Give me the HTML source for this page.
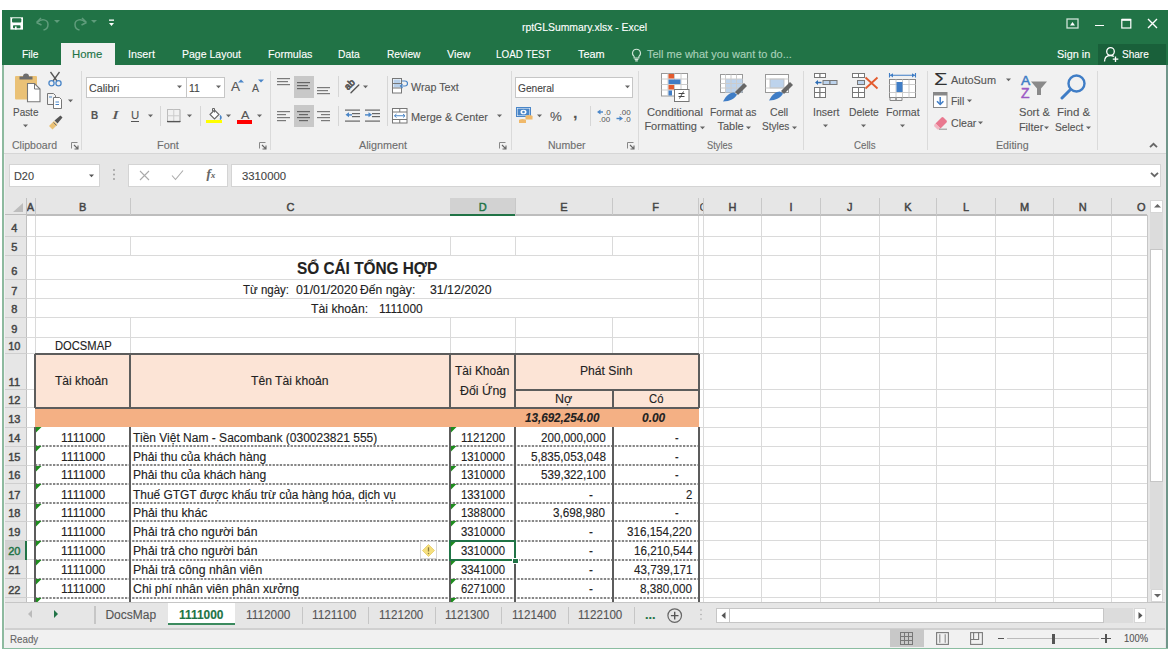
<!DOCTYPE html><html><head><meta charset="utf-8"><style>
*{margin:0;padding:0;box-sizing:border-box}
html,body{width:1169px;height:649px;overflow:hidden;background:#fff}
body{position:relative;font-family:"Liberation Sans",sans-serif;color:#444}
div{position:absolute}
.t{white-space:nowrap;-webkit-text-stroke:0.12px currentColor}
</style></head><body>
<div style="left:2.00px;top:10.00px;width:1166.00px;height:639.00px;background:#217346"></div>
<div style="left:3.50px;top:65.40px;width:1162.50px;height:88.10px;background:#f1f1f1"></div>
<div style="left:3.50px;top:153.00px;width:1162.50px;height:1.00px;background:#d6d6d6"></div>
<div style="left:3.50px;top:154.00px;width:1162.50px;height:43.50px;background:#e6e6e6"></div>
<div style="left:3.50px;top:197.50px;width:1162.50px;height:17.50px;background:#e6e6e6"></div>
<div style="left:3.50px;top:215.00px;width:1162.50px;height:387.70px;background:#fff"></div>
<div style="left:3.50px;top:602.70px;width:1162.50px;height:25.80px;background:#e6e6e6"></div>
<div style="left:3.50px;top:628.50px;width:1162.50px;height:19.00px;background:#f1f1f1"></div>
<div style="left:3.50px;top:628.00px;width:1162.50px;height:1.50px;background:#d0d0d0"></div>
<svg style="position:absolute;left:10px;top:16px;" width="14" height="15" viewBox="0 0 14 15"><rect x="0.4" y="1" width="12.6" height="12.6" fill="#fff"/><rect x="0.4" y="1" width="12.6" height="0.8" fill="#a8ccb6"/><rect x="2" y="2.2" width="9.3" height="4.2" rx="1" fill="#217346"/><rect x="3" y="9.3" width="7.5" height="3" rx="0.8" fill="#217346"/><rect x="5" y="10.5" width="1.6" height="3" fill="#fff"/></svg>
<svg style="position:absolute;left:35px;top:16px;" width="16" height="15" viewBox="0 0 16 15"><path d="M3 6 C6 2.5 13 3 13 8.5 C13 11.5 11 13.5 8.5 14" fill="none" stroke="#5f9c7b" stroke-width="1.5"/><path d="M1.5 6.5 L6 2 M1.5 6.5 L6.5 9" fill="none" stroke="#5f9c7b" stroke-width="1.5"/></svg>
<svg style="position:absolute;left:54px;top:20px;" width="6" height="4" viewBox="0 0 6 4"><path d="M0 0h6L3 3z" fill="#5f9c7b"/></svg>
<svg style="position:absolute;left:72px;top:16px;" width="16" height="15" viewBox="0 0 16 15"><path d="M13 6 C10 2.5 3 3 3 8.5 C3 11.5 5 13.5 7.5 14" fill="none" stroke="#5f9c7b" stroke-width="1.5"/><path d="M14.5 6.5 L10 2 M14.5 6.5 L9.5 9" fill="none" stroke="#5f9c7b" stroke-width="1.5"/></svg>
<svg style="position:absolute;left:91px;top:20px;" width="6" height="4" viewBox="0 0 6 4"><path d="M0 0h6L3 3z" fill="#5f9c7b"/></svg>
<svg style="position:absolute;left:108px;top:18px;" width="8" height="10" viewBox="0 0 8 10"><rect x="1" y="1.5" width="5" height="1.3" fill="#fff"/><path d="M1 5h5L3.5 8z" fill="#fff"/></svg>
<div class="t" style="left:521.50px;top:22.00px;font-size:10.5px;line-height:11.73px;color:#fff;transform:scaleX(0.9889);transform-origin:0 0;">rptGLSummary.xlsx - Excel</div>
<svg style="position:absolute;left:1066px;top:18px;" width="14" height="11" viewBox="0 0 14 11"><rect x="1" y="1" width="11" height="9" fill="none" stroke="#cfe3d7" stroke-width="1.3"/><path d="M4 7.5L6.5 4 9 7.5z" fill="#fff"/></svg>
<div style="left:1095.00px;top:24.50px;width:9.00px;height:1.30px;background:#fff"></div>
<svg style="position:absolute;left:1121px;top:18px;" width="11" height="11" viewBox="0 0 11 11"><rect x="0.8" y="1.5" width="9" height="8.5" fill="none" stroke="#fff" stroke-width="1.2"/><rect x="0.8" y="0.8" width="9" height="2" fill="#fff"/></svg>
<svg style="position:absolute;left:1147px;top:18px;" width="11" height="11" viewBox="0 0 11 11"><path d="M1 1L10 10M10 1L1 10" stroke="#fff" stroke-width="1.4"/></svg>
<div style="left:60.60px;top:43.30px;width:54.60px;height:22.30px;background:#f1f1f1"></div>
<div class="t" style="left:21.50px;top:47.95px;font-size:11px;line-height:12.29px;color:#fff;transform:scaleX(0.9310);transform-origin:0 0;">File</div>
<div class="t" style="left:72.40px;top:47.95px;font-size:11px;line-height:12.29px;color:#217346;transform:scaleX(1.0327);transform-origin:0 0;">Home</div>
<div class="t" style="left:128.30px;top:47.95px;font-size:11px;line-height:12.29px;color:#fff;transform:scaleX(0.9779);transform-origin:0 0;">Insert</div>
<div class="t" style="left:181.70px;top:47.95px;font-size:11px;line-height:12.29px;color:#fff;transform:scaleX(0.9552);transform-origin:0 0;">Page Layout</div>
<div class="t" style="left:267.60px;top:47.95px;font-size:11px;line-height:12.29px;color:#fff;transform:scaleX(0.9686);transform-origin:0 0;">Formulas</div>
<div class="t" style="left:338.30px;top:47.95px;font-size:11px;line-height:12.29px;color:#fff;transform:scaleX(0.9340);transform-origin:0 0;">Data</div>
<div class="t" style="left:387.00px;top:47.95px;font-size:11px;line-height:12.29px;color:#fff;transform:scaleX(0.9261);transform-origin:0 0;">Review</div>
<div class="t" style="left:446.60px;top:47.95px;font-size:11px;line-height:12.29px;color:#fff;transform:scaleX(0.9897);transform-origin:0 0;">View</div>
<div class="t" style="left:496.00px;top:47.95px;font-size:11px;line-height:12.29px;color:#fff;transform:scaleX(0.8979);transform-origin:0 0;">LOAD TEST</div>
<div class="t" style="left:577.80px;top:47.95px;font-size:11px;line-height:12.29px;color:#fff;transform:scaleX(0.9890);transform-origin:0 0;">Team</div>
<svg style="position:absolute;left:631px;top:48px;" width="12" height="14" viewBox="0 0 12 14"><path d="M5.5 1.2a4 4 0 0 0-2.4 7.2V10h4.8V8.4A4 4 0 0 0 5.5 1.2z" fill="none" stroke="#cfe5d8" stroke-width="1.1"/><path d="M3.6 11.4h3.8M4.2 12.9h2.6" stroke="#cfe5d8" stroke-width="1.1"/></svg>
<div class="t" style="left:647.00px;top:47.95px;font-size:11px;line-height:12.29px;color:#a9d1b9;">Tell me what you want to do...</div>
<div class="t" style="left:1056.80px;top:47.95px;font-size:11px;line-height:12.29px;color:#fff;transform:scaleX(0.9871);transform-origin:0 0;">Sign in</div>
<div style="left:1098.40px;top:43.70px;width:67.60px;height:21.50px;background:#19603a"></div>
<svg style="position:absolute;left:1103px;top:46px;" width="17" height="17" viewBox="0 0 17 17"><circle cx="7.5" cy="5.5" r="3.8" fill="none" stroke="#fff" stroke-width="1.3"/><path d="M1.5 15.5c0-4 2.5-6 6-6 1.5 0 2.5.3 3.3.9" fill="none" stroke="#fff" stroke-width="1.3"/><path d="M12.5 10.5v5.5M9.8 13.2h5.5" stroke="#fff" stroke-width="1.3"/></svg>
<div class="t" style="left:1122.40px;top:47.95px;font-size:11px;line-height:12.29px;color:#fff;transform:scaleX(0.9131);transform-origin:0 0;">Share</div>
<div style="left:80.50px;top:70.50px;width:1.00px;height:79.50px;background:#dadada"></div>
<div style="left:270.00px;top:70.50px;width:1.00px;height:79.50px;background:#dadada"></div>
<div style="left:510.50px;top:70.50px;width:1.00px;height:79.50px;background:#dadada"></div>
<div style="left:638.40px;top:70.50px;width:1.00px;height:79.50px;background:#dadada"></div>
<div style="left:802.80px;top:70.50px;width:1.00px;height:79.50px;background:#dadada"></div>
<div style="left:926.60px;top:70.50px;width:1.00px;height:79.50px;background:#dadada"></div>
<div style="left:1097.00px;top:70.50px;width:1.00px;height:79.50px;background:#dadada"></div>
<div class="t" style="left:12.00px;top:138.54px;font-size:11px;line-height:12.29px;color:#6e6e6e;transform:scaleX(0.9558);transform-origin:0 0;">Clipboard</div>
<svg style="position:absolute;left:70.5px;top:142px;" width="8" height="8" viewBox="0 0 8 8"><path d="M0.5 6.5V0.5h6" fill="none" stroke="#888" stroke-width="1"/><path d="M3 3L6.5 6.5M7 3.5V7H3.5" fill="none" stroke="#666" stroke-width="1.1"/></svg>
<div class="t" style="left:157.00px;top:138.54px;font-size:11px;line-height:12.29px;color:#6e6e6e;transform:scaleX(0.9905);transform-origin:0 0;">Font</div>
<svg style="position:absolute;left:259px;top:142px;" width="8" height="8" viewBox="0 0 8 8"><path d="M0.5 6.5V0.5h6" fill="none" stroke="#888" stroke-width="1"/><path d="M3 3L6.5 6.5M7 3.5V7H3.5" fill="none" stroke="#666" stroke-width="1.1"/></svg>
<div class="t" style="left:358.80px;top:138.54px;font-size:11px;line-height:12.29px;color:#6e6e6e;transform:scaleX(0.9814);transform-origin:0 0;">Alignment</div>
<svg style="position:absolute;left:499px;top:142px;" width="8" height="8" viewBox="0 0 8 8"><path d="M0.5 6.5V0.5h6" fill="none" stroke="#888" stroke-width="1"/><path d="M3 3L6.5 6.5M7 3.5V7H3.5" fill="none" stroke="#666" stroke-width="1.1"/></svg>
<div class="t" style="left:548.20px;top:138.54px;font-size:11px;line-height:12.29px;color:#6e6e6e;transform:scaleX(0.9586);transform-origin:0 0;">Number</div>
<svg style="position:absolute;left:627px;top:142px;" width="8" height="8" viewBox="0 0 8 8"><path d="M0.5 6.5V0.5h6" fill="none" stroke="#888" stroke-width="1"/><path d="M3 3L6.5 6.5M7 3.5V7H3.5" fill="none" stroke="#666" stroke-width="1.1"/></svg>
<div class="t" style="left:707.30px;top:138.54px;font-size:11px;line-height:12.29px;color:#6e6e6e;transform:scaleX(0.8480);transform-origin:0 0;">Styles</div>
<div class="t" style="left:854.00px;top:138.54px;font-size:11px;line-height:12.29px;color:#6e6e6e;transform:scaleX(0.8835);transform-origin:0 0;">Cells</div>
<div class="t" style="left:995.70px;top:138.54px;font-size:11px;line-height:12.29px;color:#6e6e6e;transform:scaleX(0.9693);transform-origin:0 0;">Editing</div>
<svg style="position:absolute;left:1148.5px;top:141.5px;" width="9" height="7" viewBox="0 0 9 7"><path d="M1 5.2L4.5 1.8L8 5.2" fill="none" stroke="#666" stroke-width="1.8"/></svg>
<svg style="position:absolute;left:13px;top:71px;" width="30" height="32" viewBox="0 0 30 32"><rect x="2" y="5" width="22" height="23.5" rx="1" fill="#eac176"/><path d="M6.5 8.5V5.5h3.5a3 3 0 0 1 6 0h3.5v3z" fill="#6d6d6d"/><path d="M14.5 12.5h7l5.5 5.5v12.7H14.5z" fill="#fff" stroke="#777" stroke-width="1.1"/><path d="M21.5 12.5v5.5H27" fill="none" stroke="#777" stroke-width="1"/></svg>
<div class="t" style="left:13.40px;top:105.55px;font-size:11px;line-height:12.29px;color:#555;transform:scaleX(0.9030);transform-origin:0 0;">Paste</div>
<svg style="position:absolute;left:22.7px;top:124.2px;" width="5" height="4" viewBox="0 0 5 4"><path d="M0 0.5h5L2.5 3.3z" fill="#666"/></svg>
<svg style="position:absolute;left:47px;top:71px;" width="16" height="16" viewBox="0 0 16 16"><path d="M3.5 1L10 10M12.5 1L6 10" stroke="#555" stroke-width="1.3"/><circle cx="4.5" cy="12.3" r="2.6" fill="none" stroke="#4a86c8" stroke-width="1.3"/><circle cx="11.5" cy="12.3" r="2.6" fill="none" stroke="#4a86c8" stroke-width="1.3"/></svg>
<svg style="position:absolute;left:46px;top:92px;" width="17" height="17" viewBox="0 0 17 17"><path d="M1.5 1.5h6l2 2v9h-8z" fill="#f4f4f4" stroke="#777" stroke-width="1"/><path d="M7.5 5.5h6l2 2v9h-8z" fill="#fff" stroke="#777" stroke-width="1"/><path d="M3 5h3M9.5 10h3.5M9.5 12.5h3.5" stroke="#4a86c8" stroke-width="1"/></svg>
<svg style="position:absolute;left:67.7px;top:99.2px;" width="5" height="4" viewBox="0 0 5 4"><path d="M0 0.5h5L2.5 3.3z" fill="#666"/></svg>
<svg style="position:absolute;left:47px;top:114px;" width="17" height="16" viewBox="0 0 17 16"><path d="M2 12l5-5 3.5 3.5-5 5z" fill="#eac176"/><path d="M7.5 6.5l6-5 2 2-5 6z" fill="#555"/><path d="M6.5 8.5l3 3" stroke="#777" stroke-width="1"/></svg>
<div style="left:85.50px;top:76.80px;width:101.00px;height:20.80px;background:#fff;border:1px solid #c6c6c6"></div>
<div style="left:186.00px;top:76.80px;width:39.00px;height:20.80px;background:#fff;border:1px solid #c6c6c6"></div>
<div class="t" style="left:88.50px;top:81.55px;font-size:11px;line-height:12.29px;color:#444;transform:scaleX(0.9720);transform-origin:0 0;">Calibri</div>
<svg style="position:absolute;left:176.7px;top:85px;" width="5" height="4" viewBox="0 0 5 4"><path d="M0 0.5h5L2.5 3.3z" fill="#666"/></svg>
<div class="t" style="left:188.60px;top:81.55px;font-size:11px;line-height:12.29px;color:#444;transform:scaleX(0.9459);transform-origin:0 0;">11</div>
<svg style="position:absolute;left:216.1px;top:85px;" width="5" height="4" viewBox="0 0 5 4"><path d="M0 0.5h5L2.5 3.3z" fill="#666"/></svg>
<div class="t" style="left:231.30px;top:80.89px;font-size:12.5px;line-height:13.96px;color:#555;transform:scaleX(1.0794);transform-origin:0 0;">A</div>
<svg style="position:absolute;left:238px;top:79px;" width="6" height="4" viewBox="0 0 6 4"><path d="M0 3.5L3 0.5L6 3.5z" fill="#4a86c8"/></svg>
<div class="t" style="left:252.00px;top:83.15px;font-size:10px;line-height:11.17px;color:#555;transform:scaleX(1.0494);transform-origin:0 0;">A</div>
<svg style="position:absolute;left:258px;top:79px;" width="6" height="4" viewBox="0 0 6 4"><path d="M0 0.5h6L3 3.5z" fill="#4a86c8"/></svg>
<div class="t" style="left:91.00px;top:109.39px;font-size:11.5px;line-height:12.85px;color:#555;font-weight:bold;transform:scaleX(0.8669);transform-origin:0 0;">B</div>
<div class="t" style="left:112.00px;top:109.39px;font-size:11.5px;line-height:12.85px;color:#555;font-style:italic;transform:scaleX(1.7215);transform-origin:0 0;font-family:'Liberation Serif';">I</div>
<div class="t" style="left:130.80px;top:109.39px;font-size:11.5px;line-height:12.85px;color:#555;transform:scaleX(0.9873);transform-origin:0 0;">U</div>
<div style="left:130.60px;top:121.00px;width:8.40px;height:1.00px;background:#555"></div>
<svg style="position:absolute;left:147.5px;top:114.3px;" width="5" height="4" viewBox="0 0 5 4"><path d="M0 0.5h5L2.5 3.3z" fill="#666"/></svg>
<div style="left:160.00px;top:106.00px;width:1.00px;height:20.00px;background:#d6d6d6"></div>
<svg style="position:absolute;left:167px;top:109px;" width="14" height="14" viewBox="0 0 14 14"><rect x="0.5" y="0.5" width="12.5" height="12.5" fill="none" stroke="#aaa" stroke-width="1" stroke-dasharray="1 0"/><path d="M6.75 0.5v12.5M0.5 6.75h12.5" stroke="#ccc" stroke-width="1"/><path d="M0 12.5h13.5" stroke="#555" stroke-width="1.2"/></svg>
<svg style="position:absolute;left:187.1px;top:114.3px;" width="5" height="4" viewBox="0 0 5 4"><path d="M0 0.5h5L2.5 3.3z" fill="#666"/></svg>
<div style="left:199.50px;top:106.00px;width:1.00px;height:20.00px;background:#d6d6d6"></div>
<svg style="position:absolute;left:206px;top:107px;" width="17" height="13" viewBox="0 0 17 13"><path d="M4 7.5L8.5 3 13 7.5 8.5 12z" fill="#fff" stroke="#666" stroke-width="1.1"/><path d="M6.5 4.5V1.5h2v4" fill="none" stroke="#666" stroke-width="1"/><path d="M14 8.5q2 2 0 4" fill="#4a86c8" stroke="#4a86c8" stroke-width="1.5"/></svg>
<div style="left:206.00px;top:119.80px;width:15.60px;height:3.50px;background:#ffff00"></div>
<svg style="position:absolute;left:226.0px;top:114.3px;" width="5" height="4" viewBox="0 0 5 4"><path d="M0 0.5h5L2.5 3.3z" fill="#666"/></svg>
<div class="t" style="left:241.20px;top:108.79px;font-size:11.5px;line-height:12.85px;color:#555;transform:scaleX(1.0951);transform-origin:0 0;">A</div>
<div style="left:236.90px;top:120.00px;width:15.20px;height:3.50px;background:#ff0000"></div>
<svg style="position:absolute;left:256.8px;top:114.3px;" width="5" height="4" viewBox="0 0 5 4"><path d="M0 0.5h5L2.5 3.3z" fill="#666"/></svg>
<svg style="position:absolute;left:277.4px;top:78.4px;" width="13" height="10" viewBox="0 0 13 10"><rect x="0" y="0" width="13" height="1.2" fill="#7a7a7a"/><rect x="0" y="3" width="11" height="1.2" fill="#7a7a7a"/><rect x="0" y="6" width="13" height="1.2" fill="#7a7a7a"/></svg>
<div style="left:293.70px;top:76.10px;width:20.10px;height:21.90px;background:#c8c8c8"></div>
<svg style="position:absolute;left:297px;top:82.4px;" width="13" height="10" viewBox="0 0 13 10"><rect x="0" y="0" width="13" height="1.2" fill="#666"/><rect x="0" y="3" width="11" height="1.2" fill="#666"/><rect x="0" y="6" width="13" height="1.2" fill="#666"/></svg>
<svg style="position:absolute;left:317.2px;top:86.7px;" width="13" height="10" viewBox="0 0 13 10"><rect x="0" y="0" width="13" height="1.2" fill="#7a7a7a"/><rect x="0" y="3" width="11" height="1.2" fill="#7a7a7a"/><rect x="0" y="6" width="13" height="1.2" fill="#7a7a7a"/></svg>
<div style="left:338.00px;top:76.00px;width:1.00px;height:21.00px;background:#d6d6d6"></div>
<svg style="position:absolute;left:343px;top:77px;" width="19" height="19" viewBox="0 0 19 19"><g transform="translate(5,13.5) rotate(-45)"><text x="0" y="0" font-size="9.5" font-family="Liberation Sans" fill="#555" stroke="#555" stroke-width="0.7">ab</text></g><path d="M8 15.8L15.8 8" stroke="#555" stroke-width="1.4" stroke-linecap="round"/></svg>
<svg style="position:absolute;left:362.5px;top:85px;" width="5" height="4" viewBox="0 0 5 4"><path d="M0 0.5h5L2.5 3.3z" fill="#666"/></svg>
<svg style="position:absolute;left:277.4px;top:111px;" width="13" height="13" viewBox="0 0 13 13"><rect x="0" y="0" width="13" height="1.2" fill="#7a7a7a"/><rect x="0" y="3" width="9" height="1.2" fill="#7a7a7a"/><rect x="0" y="6" width="13" height="1.2" fill="#7a7a7a"/><rect x="0" y="9" width="9" height="1.2" fill="#7a7a7a"/></svg>
<div style="left:293.70px;top:105.20px;width:20.10px;height:21.90px;background:#c8c8c8"></div>
<svg style="position:absolute;left:297px;top:111px;" width="13" height="13" viewBox="0 0 13 13"><rect x="0.0" y="0" width="13" height="1.2" fill="#666"/><rect x="2.0" y="3" width="9" height="1.2" fill="#666"/><rect x="0.0" y="6" width="13" height="1.2" fill="#666"/><rect x="2.0" y="9" width="9" height="1.2" fill="#666"/></svg>
<svg style="position:absolute;left:317.2px;top:111px;" width="13" height="13" viewBox="0 0 13 13"><rect x="0" y="0" width="13" height="1.2" fill="#7a7a7a"/><rect x="4" y="3" width="9" height="1.2" fill="#7a7a7a"/><rect x="0" y="6" width="13" height="1.2" fill="#7a7a7a"/><rect x="4" y="9" width="9" height="1.2" fill="#7a7a7a"/></svg>
<div style="left:338.00px;top:106.00px;width:1.00px;height:20.00px;background:#d6d6d6"></div>
<svg style="position:absolute;left:345px;top:109px;" width="15" height="14" viewBox="0 0 15 14"><rect x="0" y="0.5" width="15" height="1.2" fill="#666"/><rect x="7" y="4" width="8" height="1.2" fill="#666"/><rect x="7" y="7" width="8" height="1.2" fill="#666"/><rect x="0" y="11.5" width="15" height="1.2" fill="#666"/><path d="M0.5 5.8L4 3.3v5z" fill="#4a86c8"/><rect x="3" y="5.2" width="4" height="1.4" fill="#4a86c8"/></svg>
<svg style="position:absolute;left:364.7px;top:109px;" width="15" height="14" viewBox="0 0 15 14"><rect x="0" y="0.5" width="15" height="1.2" fill="#666"/><rect x="7" y="4" width="8" height="1.2" fill="#666"/><rect x="7" y="7" width="8" height="1.2" fill="#666"/><rect x="0" y="11.5" width="15" height="1.2" fill="#666"/><path d="M7 5.8L3.5 3.3v5z" fill="#4a86c8"/><rect x="0" y="5.2" width="4" height="1.4" fill="#4a86c8"/></svg>
<div style="left:386.70px;top:76.00px;width:1.00px;height:50.00px;background:#d6d6d6"></div>
<svg style="position:absolute;left:392px;top:78px;" width="16" height="16" viewBox="0 0 16 16"><rect x="0.5" y="0.5" width="9" height="14.5" fill="#fff" stroke="#777" stroke-width="1"/><rect x="1.5" y="1.5" width="7" height="3.5" fill="#b8d0ea"/><rect x="1.5" y="6" width="7" height="3.5" fill="#b8d0ea"/><path d="M0.5 5.5h9M0.5 10h9" stroke="#777" stroke-width="1"/><path d="M10 3h3a2 2 0 0 1 0 5h-4" fill="none" stroke="#4a86c8" stroke-width="1.2"/><path d="M10.5 6l-2 2 2 2" fill="none" stroke="#4a86c8" stroke-width="1.2"/></svg>
<div class="t" style="left:410.70px;top:81.45px;font-size:11px;line-height:12.29px;color:#555;transform:scaleX(0.9733);transform-origin:0 0;">Wrap Text</div>
<svg style="position:absolute;left:392px;top:107.5px;" width="16" height="16" viewBox="0 0 16 16"><rect x="0.5" y="0.5" width="14.5" height="14.5" fill="#fff" stroke="#777" stroke-width="1"/><path d="M0.5 4h14.5M0.5 11.5h14.5M7.75 0.5v3.5M7.75 11.5v3.5" stroke="#777" stroke-width="1"/><path d="M2.5 7.75h10.5" stroke="#4a86c8" stroke-width="1"/><path d="M4.5 6l-2 1.75 2 1.75M11 6l2 1.75-2 1.75" fill="none" stroke="#4a86c8" stroke-width="1"/></svg>
<div class="t" style="left:410.70px;top:110.55px;font-size:11px;line-height:12.29px;color:#555;transform:scaleX(0.9905);transform-origin:0 0;">Merge &amp; Center</div>
<svg style="position:absolute;left:496.9px;top:114.3px;" width="5" height="4" viewBox="0 0 5 4"><path d="M0 0.5h5L2.5 3.3z" fill="#666"/></svg>
<div style="left:514.90px;top:76.80px;width:118.60px;height:20.80px;background:#fff;border:1px solid #c6c6c6"></div>
<div class="t" style="left:517.70px;top:81.55px;font-size:11px;line-height:12.29px;color:#444;transform:scaleX(0.9225);transform-origin:0 0;">General</div>
<svg style="position:absolute;left:624.5px;top:85px;" width="5" height="4" viewBox="0 0 5 4"><path d="M0 0.5h5L2.5 3.3z" fill="#666"/></svg>
<svg style="position:absolute;left:516px;top:107px;" width="18" height="17" viewBox="0 0 18 17"><rect x="0.5" y="0.5" width="14" height="9" fill="#fff" stroke="#4a86c8" stroke-width="1"/><rect x="1.5" y="1.5" width="12" height="7" fill="#4a86c8"/><ellipse cx="7.5" cy="5" rx="3" ry="2.3" fill="#fff"/><ellipse cx="7.5" cy="5" rx="1.3" ry="1.3" fill="#4a86c8"/><ellipse cx="13" cy="9.5" rx="3.5" ry="1.5" fill="#f0b96a"/><rect x="9.5" y="9.5" width="7" height="3" fill="#f0b96a"/><ellipse cx="6.5" cy="13.5" rx="3.5" ry="1.5" fill="#f0b96a"/><rect x="3" y="13" width="7" height="3" fill="#f0b96a"/></svg>
<svg style="position:absolute;left:537.1px;top:114.3px;" width="5" height="4" viewBox="0 0 5 4"><path d="M0 0.5h5L2.5 3.3z" fill="#666"/></svg>
<div class="t" style="left:550.30px;top:109.83px;font-size:13px;line-height:14.52px;color:#555;transform:scaleX(1.0208);transform-origin:0 0;">%</div>
<div class="t" style="left:572.50px;top:105.83px;font-size:14px;line-height:15.64px;color:#555;font-weight:bold;transform:scaleX(1.1570);transform-origin:0 0;">,</div>
<div style="left:589.60px;top:106.00px;width:1.00px;height:20.00px;background:#d6d6d6"></div>
<svg style="position:absolute;left:596px;top:107px;" width="15" height="16" viewBox="0 0 15 16"><path d="M1 5L4.5 2.5V7.5z" fill="#4a86c8"/><rect x="4" y="4.3" width="3" height="1.4" fill="#4a86c8"/><text x="8" y="8" font-size="8" font-family="Liberation Sans" fill="#555">.0</text><text x="3" y="15" font-size="8" font-family="Liberation Sans" fill="#555">.00</text></svg>
<svg style="position:absolute;left:616px;top:107px;" width="15" height="16" viewBox="0 0 15 16"><text x="3.5" y="7.5" font-size="8" font-family="Liberation Sans" fill="#555">.00</text><path d="M7 11.5L3.5 9V14z" fill="#4a86c8"/><rect x="0.5" y="10.8" width="3.5" height="1.4" fill="#4a86c8"/><text x="8" y="15" font-size="8" font-family="Liberation Sans" fill="#555">.0</text></svg>
<svg style="position:absolute;left:660px;top:73px;" width="31" height="30" viewBox="0 0 31 30"><rect x="1.5" y="0.5" width="26" height="22.5" fill="#fff" stroke="#999" stroke-width="1"/><path d="M1.5 6h26M1.5 11.5h26M1.5 17h26M8 0.5v22.5M14.5 0.5v22.5M21 0.5v22.5" stroke="#ccc" stroke-width="1"/><rect x="8.5" y="1" width="5.5" height="4.5" fill="#e35b2e"/><rect x="8.5" y="6.5" width="12" height="4.5" fill="#3f7dc6"/><rect x="8.5" y="12" width="5.5" height="4.5" fill="#e35b2e"/><rect x="8.5" y="17.5" width="3.5" height="5" fill="#3f7dc6"/><rect x="14.5" y="16.5" width="14.5" height="12" fill="#fff" stroke="#777" stroke-width="1"/><path d="M18.5 20.5h6M18.5 23.5h6M23.5 18.5l-4 7" stroke="#444" stroke-width="1"/></svg>
<div class="t" style="left:646.90px;top:105.95px;font-size:11px;line-height:12.29px;color:#555;transform:scaleX(1.0175);transform-origin:0 0;">Conditional</div>
<div class="t" style="left:644.40px;top:120.45px;font-size:11px;line-height:12.29px;color:#555;">Formatting</div>
<svg style="position:absolute;left:700.3px;top:125.5px;" width="5" height="4" viewBox="0 0 5 4"><path d="M0 0.5h5L2.5 3.3z" fill="#666"/></svg>
<svg style="position:absolute;left:720px;top:74px;" width="29" height="29" viewBox="0 0 29 29"><rect x="0.5" y="0.5" width="22" height="18" fill="#fff" stroke="#999" stroke-width="1"/><rect x="5.5" y="5" width="17" height="13.5" fill="#bdd3ec"/><path d="M0.5 5h22M0.5 9.5h22M0.5 14h22M5.5 0.5v18M11 0.5v18M16.5 0.5v18" stroke="#ccc" stroke-width="1"/><path d="M3 27.5c3-6 7-9 11-9l3 2c-2 4-7 7-14 7z" fill="#3f7dc6"/><path d="M15 18l9-9 3 3-9 9z" fill="#666"/></svg>
<div class="t" style="left:710.20px;top:105.95px;font-size:11px;line-height:12.29px;color:#555;transform:scaleX(0.9393);transform-origin:0 0;">Format as</div>
<div class="t" style="left:717.40px;top:120.45px;font-size:11px;line-height:12.29px;color:#555;">Table</div>
<svg style="position:absolute;left:746.0px;top:125.5px;" width="5" height="4" viewBox="0 0 5 4"><path d="M0 0.5h5L2.5 3.3z" fill="#666"/></svg>
<svg style="position:absolute;left:765px;top:74px;" width="30" height="28" viewBox="0 0 30 28"><rect x="0.5" y="0.5" width="23" height="18" fill="#fff" stroke="#999" stroke-width="1"/><rect x="5" y="5" width="14" height="9" fill="#bdd3ec" stroke="#bbb" stroke-width="0.8"/><path d="M0.5 5h23M0.5 14h23" stroke="#ccc" stroke-width="1"/><path d="M4 26.5c3-6 7-9 11-9l3 2c-2 4-7 7-14 7z" fill="#3f7dc6"/><path d="M16 17l9-9 3 3-9 9z" fill="#666"/></svg>
<div class="t" style="left:769.80px;top:105.95px;font-size:11px;line-height:12.29px;color:#555;transform:scaleX(0.9605);transform-origin:0 0;">Cell</div>
<div class="t" style="left:761.80px;top:120.45px;font-size:11px;line-height:12.29px;color:#555;transform:scaleX(0.9147);transform-origin:0 0;">Styles</div>
<svg style="position:absolute;left:791.5px;top:125.5px;" width="5" height="4" viewBox="0 0 5 4"><path d="M0 0.5h5L2.5 3.3z" fill="#666"/></svg>
<svg style="position:absolute;left:813px;top:72px;" width="27" height="28" viewBox="0 0 27 28"><rect x="1.5" y="1.5" width="5.5" height="4" fill="#fff" stroke="#777" stroke-width="1"/><rect x="7" y="1.5" width="5.5" height="4" fill="#fff" stroke="#777" stroke-width="1"/><rect x="10" y="8.5" width="7" height="4" fill="#bdd3ec" stroke="#777" stroke-width="1"/><rect x="17" y="8.5" width="7" height="4" fill="#bdd3ec" stroke="#777" stroke-width="1"/><path d="M2 10.5l3-2.5v5z" fill="#2f6db5"/><rect x="4" y="9.8" width="4.5" height="1.5" fill="#2f6db5"/><rect x="1.5" y="15.5" width="5.5" height="5" fill="#fff" stroke="#777" stroke-width="1"/><rect x="7" y="15.5" width="5.5" height="5" fill="#fff" stroke="#777" stroke-width="1"/><rect x="1.5" y="20.5" width="5.5" height="5" fill="#fff" stroke="#777" stroke-width="1"/><rect x="7" y="20.5" width="5.5" height="5" fill="#fff" stroke="#777" stroke-width="1"/></svg>
<div class="t" style="left:812.50px;top:106.05px;font-size:11px;line-height:12.29px;color:#555;transform:scaleX(0.9561);transform-origin:0 0;">Insert</div>
<svg style="position:absolute;left:823.2px;top:124.3px;" width="5" height="4" viewBox="0 0 5 4"><path d="M0 0.5h5L2.5 3.3z" fill="#666"/></svg>
<svg style="position:absolute;left:851px;top:72px;" width="29" height="28" viewBox="0 0 29 28"><rect x="1.5" y="1.5" width="6" height="4" fill="#fff" stroke="#777" stroke-width="1"/><rect x="7.5" y="1.5" width="6" height="4" fill="#fff" stroke="#777" stroke-width="1"/><rect x="6.5" y="8.5" width="7" height="4" fill="#bdd3ec" stroke="#777" stroke-width="1"/><rect x="1.5" y="15.5" width="6" height="5" fill="#fff" stroke="#777" stroke-width="1"/><rect x="7.5" y="15.5" width="6" height="5" fill="#fff" stroke="#777" stroke-width="1"/><rect x="1.5" y="20.5" width="6" height="5" fill="#fff" stroke="#777" stroke-width="1"/><rect x="7.5" y="20.5" width="6" height="5" fill="#fff" stroke="#777" stroke-width="1"/><path d="M14.5 5.5l12 11M26.5 5.5l-12 11" stroke="#e35b2e" stroke-width="1.8"/></svg>
<div class="t" style="left:849.20px;top:106.05px;font-size:11px;line-height:12.29px;color:#555;transform:scaleX(0.9372);transform-origin:0 0;">Delete</div>
<svg style="position:absolute;left:861.3px;top:124.3px;" width="5" height="4" viewBox="0 0 5 4"><path d="M0 0.5h5L2.5 3.3z" fill="#666"/></svg>
<svg style="position:absolute;left:888px;top:72px;" width="29" height="31" viewBox="0 0 29 31"><path d="M1.5 1v4.5M27.5 1v4.5M2 3.2h25" stroke="#3f7dc6" stroke-width="1.1"/><path d="M2 3.2l3-2v4.4zM27 3.2l-3-2v4.4z" fill="#3f7dc6"/><rect x="1.5" y="7.5" width="26" height="18" fill="#fff" stroke="#888" stroke-width="1"/><path d="M1.5 12.5h26M1.5 20.5h26M8 7.5v18M14.5 7.5v18M21 7.5v18" stroke="#ccc" stroke-width="1"/><rect x="8.5" y="10" width="6" height="10" fill="#3f7dc6"/><path d="M2 25.5v3h6v-3M8 25.5v3h6v-3" fill="none" stroke="#888" stroke-width="1"/></svg>
<div class="t" style="left:886.00px;top:106.05px;font-size:11px;line-height:12.29px;color:#555;transform:scaleX(0.9646);transform-origin:0 0;">Format</div>
<svg style="position:absolute;left:900.1px;top:124.3px;" width="5" height="4" viewBox="0 0 5 4"><path d="M0 0.5h5L2.5 3.3z" fill="#666"/></svg>
<div class="t" style="left:933.50px;top:70.41px;font-size:17px;line-height:18.99px;color:#333;transform:scaleX(1.2847);transform-origin:0 0;">&Sigma;</div>
<div class="t" style="left:951.40px;top:73.75px;font-size:11px;line-height:12.29px;color:#555;transform:scaleX(0.9946);transform-origin:0 0;">AutoSum</div>
<svg style="position:absolute;left:1005.5px;top:77.5px;" width="5" height="4" viewBox="0 0 5 4"><path d="M0 0.5h5L2.5 3.3z" fill="#666"/></svg>
<svg style="position:absolute;left:933px;top:92px;" width="16" height="17" viewBox="0 0 16 17"><rect x="0.5" y="0.5" width="13.5" height="15" fill="#fff" stroke="#888" stroke-width="1"/><rect x="0.5" y="0.5" width="13.5" height="3" fill="#888"/><path d="M7.2 5v7" stroke="#3f7dc6" stroke-width="1.5"/><path d="M4 9.2l3.2 3.3 3.2-3.3" fill="none" stroke="#3f7dc6" stroke-width="1.5"/></svg>
<div class="t" style="left:951.40px;top:95.25px;font-size:11px;line-height:12.29px;color:#555;transform:scaleX(0.9394);transform-origin:0 0;">Fill</div>
<svg style="position:absolute;left:966.5px;top:99.3px;" width="5" height="4" viewBox="0 0 5 4"><path d="M0 0.5h5L2.5 3.3z" fill="#666"/></svg>
<svg style="position:absolute;left:933px;top:115px;" width="16" height="15" viewBox="0 0 16 15"><path d="M2.5 8.5L8.5 2.5a1.5 1.5 0 0 1 2 0l3 3a1.5 1.5 0 0 1 0 2L7.5 13.5z" fill="#e9788f"/><path d="M2.5 8.5l5 5-1 1H4.5l-3-3a1.5 1.5 0 0 1 0-2z" fill="#f2b6c2"/><path d="M6 14.2h8" stroke="#999" stroke-width="1.1"/></svg>
<div class="t" style="left:951.40px;top:117.05px;font-size:11px;line-height:12.29px;color:#555;transform:scaleX(0.9625);transform-origin:0 0;">Clear</div>
<svg style="position:absolute;left:978.0px;top:121px;" width="5" height="4" viewBox="0 0 5 4"><path d="M0 0.5h5L2.5 3.3z" fill="#666"/></svg>
<div class="t" style="left:1020.50px;top:73.08px;font-size:13.5px;line-height:15.08px;color:#3f7dc6;transform:scaleX(1.0217);transform-origin:0 0;-webkit-text-stroke:0.5px #3f7dc6;">A</div>
<div class="t" style="left:1021.00px;top:85.93px;font-size:14px;line-height:15.64px;color:#9b59c4;transform:scaleX(0.9940);transform-origin:0 0;-webkit-text-stroke:0.5px #9b59c4;">Z</div>
<svg style="position:absolute;left:1030px;top:80px;" width="18" height="16" viewBox="0 0 18 16"><path d="M1 1.5h16L11 8.5v6.5h-4V8.5z" fill="#8a8a8a"/></svg>
<div class="t" style="left:1018.50px;top:105.84px;font-size:11px;line-height:12.29px;color:#555;transform:scaleX(1.0109);transform-origin:0 0;">Sort &amp;</div>
<div class="t" style="left:1018.90px;top:121.05px;font-size:11px;line-height:12.29px;color:#555;">Filter</div>
<svg style="position:absolute;left:1044.3px;top:125.5px;" width="5" height="4" viewBox="0 0 5 4"><path d="M0 0.5h5L2.5 3.3z" fill="#666"/></svg>
<svg style="position:absolute;left:1059px;top:73px;" width="28" height="27" viewBox="0 0 28 27"><circle cx="17.5" cy="10.5" r="8" fill="none" stroke="#3f7dc6" stroke-width="2.4"/><path d="M11.5 16.5L3 25" stroke="#3f7dc6" stroke-width="3" stroke-linecap="round"/></svg>
<div class="t" style="left:1056.80px;top:105.84px;font-size:11px;line-height:12.29px;color:#555;transform:scaleX(1.0444);transform-origin:0 0;">Find &amp;</div>
<div class="t" style="left:1055.00px;top:121.05px;font-size:11px;line-height:12.29px;color:#555;transform:scaleX(0.9257);transform-origin:0 0;">Select</div>
<svg style="position:absolute;left:1086.0px;top:125.5px;" width="5" height="4" viewBox="0 0 5 4"><path d="M0 0.5h5L2.5 3.3z" fill="#666"/></svg>
<div style="left:8.60px;top:163.80px;width:91.40px;height:23.50px;background:#fff;border:1px solid #d4d4d4"></div>
<div class="t" style="left:14.00px;top:170.24px;font-size:11px;line-height:12.29px;color:#444;transform:scaleX(0.9912);transform-origin:0 0;">D20</div>
<svg style="position:absolute;left:88.5px;top:173.5px;" width="5" height="4" viewBox="0 0 5 4"><path d="M0 0.5h5L2.5 3.3z" fill="#555"/></svg>
<svg style="position:absolute;left:112px;top:168px;" width="4" height="14" viewBox="0 0 4 14"><circle cx="2" cy="2" r="0.9" fill="#999"/><circle cx="2" cy="6.5" r="0.9" fill="#999"/><circle cx="2" cy="11" r="0.9" fill="#999"/></svg>
<div style="left:128.30px;top:163.80px;width:99.50px;height:23.50px;background:#fff;border:1px solid #d4d4d4"></div>
<svg style="position:absolute;left:139px;top:170px;" width="11" height="11" viewBox="0 0 11 11"><path d="M1 1L10 10M10 1L1 10" stroke="#aaa" stroke-width="1.1"/></svg>
<svg style="position:absolute;left:171px;top:169px;" width="13" height="12" viewBox="0 0 13 12"><path d="M1 6.5L4.5 10.5L12 1.5" fill="none" stroke="#aaa" stroke-width="1.1"/></svg>
<div class="t" style="left:206.50px;top:167.24px;font-size:13px;line-height:14.52px;color:#666;font-weight:bold;font-style:italic;font-family:'Liberation Serif';">f</div>
<div class="t" style="left:211.00px;top:171.11px;font-size:8.5px;line-height:9.49px;color:#666;font-weight:bold;font-style:italic;font-family:'Liberation Serif';">x</div>
<div style="left:231.00px;top:163.50px;width:930.00px;height:23.10px;background:#fff;border:1px solid #d4d4d4"></div>
<div class="t" style="left:242.00px;top:169.79px;font-size:11.5px;line-height:12.85px;color:#444;transform:scaleX(0.9829);transform-origin:0 0;">3310000</div>
<svg style="position:absolute;left:1150px;top:171px;" width="9" height="7" viewBox="0 0 9 7"><path d="M1 1.8L4.5 5.2L8 1.8" fill="none" stroke="#666" stroke-width="1.8"/></svg>
<div style="left:26.50px;top:235.50px;width:1120.00px;height:1.00px;background:#dadada"></div>
<div style="left:26.50px;top:255.00px;width:1120.00px;height:1.00px;background:#dadada"></div>
<div style="left:26.50px;top:279.10px;width:1120.00px;height:1.00px;background:#dadada"></div>
<div style="left:26.50px;top:298.20px;width:1120.00px;height:1.00px;background:#dadada"></div>
<div style="left:26.50px;top:316.70px;width:1120.00px;height:1.00px;background:#dadada"></div>
<div style="left:26.50px;top:336.50px;width:1120.00px;height:1.00px;background:#dadada"></div>
<div style="left:26.50px;top:353.20px;width:1120.00px;height:1.00px;background:#dadada"></div>
<div style="left:26.50px;top:389.20px;width:1120.00px;height:1.00px;background:#dadada"></div>
<div style="left:26.50px;top:407.40px;width:1120.00px;height:1.00px;background:#dadada"></div>
<div style="left:26.50px;top:426.70px;width:1120.00px;height:1.00px;background:#dadada"></div>
<div style="left:26.50px;top:445.70px;width:1120.00px;height:1.00px;background:#dadada"></div>
<div style="left:26.50px;top:464.80px;width:1120.00px;height:1.00px;background:#dadada"></div>
<div style="left:26.50px;top:483.10px;width:1120.00px;height:1.00px;background:#dadada"></div>
<div style="left:26.50px;top:502.80px;width:1120.00px;height:1.00px;background:#dadada"></div>
<div style="left:26.50px;top:520.70px;width:1120.00px;height:1.00px;background:#dadada"></div>
<div style="left:26.50px;top:540.10px;width:1120.00px;height:1.00px;background:#dadada"></div>
<div style="left:26.50px;top:559.10px;width:1120.00px;height:1.00px;background:#dadada"></div>
<div style="left:26.50px;top:578.10px;width:1120.00px;height:1.00px;background:#dadada"></div>
<div style="left:26.50px;top:597.20px;width:1120.00px;height:1.00px;background:#dadada"></div>
<div style="left:34.50px;top:215.00px;width:1.00px;height:387.70px;background:#dadada"></div>
<div style="left:129.90px;top:215.00px;width:1.00px;height:387.70px;background:#dadada"></div>
<div style="left:449.80px;top:215.00px;width:1.00px;height:387.70px;background:#dadada"></div>
<div style="left:514.70px;top:215.00px;width:1.00px;height:387.70px;background:#dadada"></div>
<div style="left:612.20px;top:215.00px;width:1.00px;height:387.70px;background:#dadada"></div>
<div style="left:698.20px;top:215.00px;width:1.00px;height:387.70px;background:#dadada"></div>
<div style="left:702.80px;top:215.00px;width:1.00px;height:387.70px;background:#dadada"></div>
<div style="left:761.30px;top:215.00px;width:1.00px;height:387.70px;background:#dadada"></div>
<div style="left:819.90px;top:215.00px;width:1.00px;height:387.70px;background:#dadada"></div>
<div style="left:878.70px;top:215.00px;width:1.00px;height:387.70px;background:#dadada"></div>
<div style="left:936.30px;top:215.00px;width:1.00px;height:387.70px;background:#dadada"></div>
<div style="left:994.70px;top:215.00px;width:1.00px;height:387.70px;background:#dadada"></div>
<div style="left:1053.30px;top:215.00px;width:1.00px;height:387.70px;background:#dadada"></div>
<div style="left:1111.00px;top:215.00px;width:1.00px;height:387.70px;background:#dadada"></div>
<div style="left:35.50px;top:215.50px;width:662.70px;height:20.00px;background:#fff"></div>
<div style="left:35.50px;top:256.00px;width:662.70px;height:23.10px;background:#fff"></div>
<div style="left:35.50px;top:280.10px;width:662.70px;height:18.10px;background:#fff"></div>
<div style="left:35.50px;top:299.20px;width:662.70px;height:17.50px;background:#fff"></div>
<div style="left:35.00px;top:353.70px;width:663.70px;height:54.20px;background:#fce4d6"></div>
<div style="left:35.00px;top:407.90px;width:663.70px;height:19.30px;background:#f4b084"></div>
<div style="left:35.00px;top:427.20px;width:663.70px;height:175.50px;background:#fff"></div>
<div style="left:35.00px;top:353.00px;width:663.70px;height:2.00px;background:#5c5c5c"></div>
<div style="left:35.00px;top:407.00px;width:663.70px;height:2.00px;background:#5c5c5c"></div>
<div style="left:34.00px;top:353.70px;width:2.00px;height:54.20px;background:#5c5c5c"></div>
<div style="left:129.00px;top:353.70px;width:2.00px;height:54.20px;background:#5c5c5c"></div>
<div style="left:449.00px;top:353.70px;width:2.00px;height:54.20px;background:#5c5c5c"></div>
<div style="left:514.00px;top:353.70px;width:2.00px;height:54.20px;background:#5c5c5c"></div>
<div style="left:698.00px;top:353.70px;width:2.00px;height:54.20px;background:#5c5c5c"></div>
<div style="left:515.20px;top:389.00px;width:183.50px;height:2.00px;background:#5c5c5c"></div>
<div style="left:612.00px;top:389.70px;width:2.00px;height:18.20px;background:#5c5c5c"></div>
<div style="left:34.00px;top:427.20px;width:2.00px;height:175.50px;background:#5c5c5c"></div>
<div style="left:129.00px;top:427.20px;width:2.00px;height:175.50px;background:#5c5c5c"></div>
<div style="left:449.00px;top:427.20px;width:2.00px;height:175.50px;background:#5c5c5c"></div>
<div style="left:514.00px;top:427.20px;width:2.00px;height:175.50px;background:#5c5c5c"></div>
<div style="left:612.00px;top:427.20px;width:2.00px;height:175.50px;background:#5c5c5c"></div>
<div style="left:698.00px;top:427.20px;width:2.00px;height:175.50px;background:#5c5c5c"></div>
<svg style="position:absolute;left:35px;top:444px;" width="663.7" height="4" viewBox="0 0 663.7 4"><line x1="0" y1="2" x2="663.7" y2="2" stroke="#606060" stroke-width="1.7" stroke-dasharray="2.3 1.3"/></svg>
<svg style="position:absolute;left:35px;top:463px;" width="663.7" height="4" viewBox="0 0 663.7 4"><line x1="0" y1="2" x2="663.7" y2="2" stroke="#606060" stroke-width="1.7" stroke-dasharray="2.3 1.3"/></svg>
<svg style="position:absolute;left:35px;top:482px;" width="663.7" height="4" viewBox="0 0 663.7 4"><line x1="0" y1="2" x2="663.7" y2="2" stroke="#606060" stroke-width="1.7" stroke-dasharray="2.3 1.3"/></svg>
<svg style="position:absolute;left:35px;top:501px;" width="663.7" height="4" viewBox="0 0 663.7 4"><line x1="0" y1="2" x2="663.7" y2="2" stroke="#606060" stroke-width="1.7" stroke-dasharray="2.3 1.3"/></svg>
<svg style="position:absolute;left:35px;top:519px;" width="663.7" height="4" viewBox="0 0 663.7 4"><line x1="0" y1="2" x2="663.7" y2="2" stroke="#606060" stroke-width="1.7" stroke-dasharray="2.3 1.3"/></svg>
<svg style="position:absolute;left:35px;top:539px;" width="663.7" height="4" viewBox="0 0 663.7 4"><line x1="0" y1="2" x2="663.7" y2="2" stroke="#606060" stroke-width="1.7" stroke-dasharray="2.3 1.3"/></svg>
<svg style="position:absolute;left:35px;top:558px;" width="663.7" height="4" viewBox="0 0 663.7 4"><line x1="0" y1="2" x2="663.7" y2="2" stroke="#606060" stroke-width="1.7" stroke-dasharray="2.3 1.3"/></svg>
<svg style="position:absolute;left:35px;top:577px;" width="663.7" height="4" viewBox="0 0 663.7 4"><line x1="0" y1="2" x2="663.7" y2="2" stroke="#606060" stroke-width="1.7" stroke-dasharray="2.3 1.3"/></svg>
<svg style="position:absolute;left:35px;top:596px;" width="663.7" height="4" viewBox="0 0 663.7 4"><line x1="0" y1="2" x2="663.7" y2="2" stroke="#606060" stroke-width="1.7" stroke-dasharray="2.3 1.3"/></svg>
<div style="left:3.50px;top:197.50px;width:1143.00px;height:17.50px;background:#e6e6e6"></div>
<div style="left:3.50px;top:214.00px;width:1143.00px;height:1.50px;background:#bdbdbd"></div>
<div style="left:34.50px;top:198.00px;width:1.00px;height:17.00px;background:#c8c8c8"></div>
<div style="left:129.90px;top:198.00px;width:1.00px;height:17.00px;background:#c8c8c8"></div>
<div style="left:449.80px;top:198.00px;width:1.00px;height:17.00px;background:#c8c8c8"></div>
<div style="left:514.70px;top:198.00px;width:1.00px;height:17.00px;background:#c8c8c8"></div>
<div style="left:612.20px;top:198.00px;width:1.00px;height:17.00px;background:#c8c8c8"></div>
<div style="left:698.20px;top:198.00px;width:1.00px;height:17.00px;background:#c8c8c8"></div>
<div style="left:702.80px;top:198.00px;width:1.00px;height:17.00px;background:#c8c8c8"></div>
<div style="left:761.30px;top:198.00px;width:1.00px;height:17.00px;background:#c8c8c8"></div>
<div style="left:819.90px;top:198.00px;width:1.00px;height:17.00px;background:#c8c8c8"></div>
<div style="left:878.70px;top:198.00px;width:1.00px;height:17.00px;background:#c8c8c8"></div>
<div style="left:936.30px;top:198.00px;width:1.00px;height:17.00px;background:#c8c8c8"></div>
<div style="left:994.70px;top:198.00px;width:1.00px;height:17.00px;background:#c8c8c8"></div>
<div style="left:1053.30px;top:198.00px;width:1.00px;height:17.00px;background:#c8c8c8"></div>
<div style="left:1111.00px;top:198.00px;width:1.00px;height:17.00px;background:#c8c8c8"></div>
<div style="left:450.30px;top:197.50px;width:64.90px;height:17.50px;background:#d2d2d2"></div>
<div style="left:450.30px;top:213.70px;width:64.90px;height:2.00px;background:#217346"></div>
<svg style="position:absolute;left:12px;top:202px;" width="12" height="11" viewBox="0 0 12 11"><path d="M11 1V10H1z" fill="#bdbdbd"/></svg>
<div class="t" style="left:26.83px;top:200.64px;font-size:11px;line-height:12.29px;color:#444;-webkit-text-stroke:0.45px #444;">A</div>
<div class="t" style="left:79.03px;top:200.64px;font-size:11px;line-height:12.29px;color:#444;-webkit-text-stroke:0.45px #444;">B</div>
<div class="t" style="left:286.38px;top:200.64px;font-size:11px;line-height:12.29px;color:#444;-webkit-text-stroke:0.45px #444;">C</div>
<div class="t" style="left:478.78px;top:200.64px;font-size:11px;line-height:12.29px;color:#217346;-webkit-text-stroke:0.45px #217346;">D</div>
<div class="t" style="left:560.28px;top:200.64px;font-size:11px;line-height:12.29px;color:#444;-webkit-text-stroke:0.45px #444;">E</div>
<div class="t" style="left:652.34px;top:200.64px;font-size:11px;line-height:12.29px;color:#444;-webkit-text-stroke:0.45px #444;">F</div>
<div class="t" style="left:728.58px;top:200.64px;font-size:11px;line-height:12.29px;color:#444;-webkit-text-stroke:0.45px #444;">H</div>
<div class="t" style="left:789.57px;top:200.64px;font-size:11px;line-height:12.29px;color:#444;-webkit-text-stroke:0.45px #444;">I</div>
<div class="t" style="left:847.05px;top:200.64px;font-size:11px;line-height:12.29px;color:#444;-webkit-text-stroke:0.45px #444;">J</div>
<div class="t" style="left:904.33px;top:200.64px;font-size:11px;line-height:12.29px;color:#444;-webkit-text-stroke:0.45px #444;">K</div>
<div class="t" style="left:962.94px;top:200.64px;font-size:11px;line-height:12.29px;color:#444;-webkit-text-stroke:0.45px #444;">L</div>
<div class="t" style="left:1019.92px;top:200.64px;font-size:11px;line-height:12.29px;color:#444;-webkit-text-stroke:0.45px #444;">M</div>
<div class="t" style="left:1078.68px;top:200.64px;font-size:11px;line-height:12.29px;color:#444;-webkit-text-stroke:0.45px #444;">N</div>
<div class="t" style="left:1137.12px;top:200.64px;font-size:11px;line-height:12.29px;color:#444;-webkit-text-stroke:0.45px #444;">O</div>
<div style="left:699.5px;top:198px;width:3.5px;height:16px;overflow:hidden"><div class="t" style="left:0px;top:2.54px;font-size:11px;line-height:12.3px;color:#444">G</div></div>
<div style="left:3.50px;top:215.00px;width:23.00px;height:387.70px;background:#e6e6e6"></div>
<div style="left:26.00px;top:198.00px;width:1.00px;height:404.70px;background:#c0c0c0"></div>
<div style="left:3.50px;top:235.50px;width:23.00px;height:1.00px;background:#cfcfcf"></div>
<div style="left:3.50px;top:255.00px;width:23.00px;height:1.00px;background:#cfcfcf"></div>
<div style="left:3.50px;top:279.10px;width:23.00px;height:1.00px;background:#cfcfcf"></div>
<div style="left:3.50px;top:298.20px;width:23.00px;height:1.00px;background:#cfcfcf"></div>
<div style="left:3.50px;top:316.70px;width:23.00px;height:1.00px;background:#cfcfcf"></div>
<div style="left:3.50px;top:336.50px;width:23.00px;height:1.00px;background:#cfcfcf"></div>
<div style="left:3.50px;top:353.20px;width:23.00px;height:1.00px;background:#cfcfcf"></div>
<div style="left:3.50px;top:389.20px;width:23.00px;height:1.00px;background:#cfcfcf"></div>
<div style="left:3.50px;top:407.40px;width:23.00px;height:1.00px;background:#cfcfcf"></div>
<div style="left:3.50px;top:426.70px;width:23.00px;height:1.00px;background:#cfcfcf"></div>
<div style="left:3.50px;top:445.70px;width:23.00px;height:1.00px;background:#cfcfcf"></div>
<div style="left:3.50px;top:464.80px;width:23.00px;height:1.00px;background:#cfcfcf"></div>
<div style="left:3.50px;top:483.10px;width:23.00px;height:1.00px;background:#cfcfcf"></div>
<div style="left:3.50px;top:502.80px;width:23.00px;height:1.00px;background:#cfcfcf"></div>
<div style="left:3.50px;top:520.70px;width:23.00px;height:1.00px;background:#cfcfcf"></div>
<div style="left:3.50px;top:540.10px;width:23.00px;height:1.00px;background:#cfcfcf"></div>
<div style="left:3.50px;top:559.10px;width:23.00px;height:1.00px;background:#cfcfcf"></div>
<div style="left:3.50px;top:578.10px;width:23.00px;height:1.00px;background:#cfcfcf"></div>
<div style="left:3.50px;top:597.20px;width:23.00px;height:1.00px;background:#cfcfcf"></div>
<div style="left:3.50px;top:540.60px;width:21.50px;height:19.00px;background:#d2d2d2"></div>
<div style="left:24.80px;top:540.60px;width:2.00px;height:19.00px;background:#217346"></div>
<div class="t" style="left:11.24px;top:221.84px;font-size:11px;line-height:12.29px;color:#444;-webkit-text-stroke:0.45px #444;">4</div>
<div class="t" style="left:11.24px;top:241.34px;font-size:11px;line-height:12.29px;color:#444;-webkit-text-stroke:0.45px #444;">5</div>
<div class="t" style="left:11.24px;top:265.45px;font-size:11px;line-height:12.29px;color:#444;-webkit-text-stroke:0.45px #444;">6</div>
<div class="t" style="left:11.24px;top:284.55px;font-size:11px;line-height:12.29px;color:#444;-webkit-text-stroke:0.45px #444;">7</div>
<div class="t" style="left:11.24px;top:303.05px;font-size:11px;line-height:12.29px;color:#444;-webkit-text-stroke:0.45px #444;">8</div>
<div class="t" style="left:11.24px;top:322.85px;font-size:11px;line-height:12.29px;color:#444;-webkit-text-stroke:0.45px #444;">9</div>
<div class="t" style="left:8.18px;top:339.55px;font-size:11px;line-height:12.29px;color:#444;-webkit-text-stroke:0.45px #444;">10</div>
<div class="t" style="left:8.59px;top:375.55px;font-size:11px;line-height:12.29px;color:#444;-webkit-text-stroke:0.45px #444;">11</div>
<div class="t" style="left:8.18px;top:393.75px;font-size:11px;line-height:12.29px;color:#444;-webkit-text-stroke:0.45px #444;">12</div>
<div class="t" style="left:8.18px;top:413.05px;font-size:11px;line-height:12.29px;color:#444;-webkit-text-stroke:0.45px #444;">13</div>
<div class="t" style="left:8.18px;top:432.05px;font-size:11px;line-height:12.29px;color:#444;-webkit-text-stroke:0.45px #444;">14</div>
<div class="t" style="left:8.18px;top:451.15px;font-size:11px;line-height:12.29px;color:#444;-webkit-text-stroke:0.45px #444;">15</div>
<div class="t" style="left:8.18px;top:469.45px;font-size:11px;line-height:12.29px;color:#444;-webkit-text-stroke:0.45px #444;">16</div>
<div class="t" style="left:8.18px;top:489.15px;font-size:11px;line-height:12.29px;color:#444;-webkit-text-stroke:0.45px #444;">17</div>
<div class="t" style="left:8.18px;top:507.05px;font-size:11px;line-height:12.29px;color:#444;-webkit-text-stroke:0.45px #444;">18</div>
<div class="t" style="left:8.18px;top:526.44px;font-size:11px;line-height:12.29px;color:#444;-webkit-text-stroke:0.45px #444;">19</div>
<div class="t" style="left:8.18px;top:545.44px;font-size:11px;line-height:12.29px;color:#217346;-webkit-text-stroke:0.45px #217346;">20</div>
<div class="t" style="left:8.18px;top:564.44px;font-size:11px;line-height:12.29px;color:#444;-webkit-text-stroke:0.45px #444;">21</div>
<div class="t" style="left:8.18px;top:583.54px;font-size:11px;line-height:12.29px;color:#444;-webkit-text-stroke:0.45px #444;">22</div>
<div class="t" style="left:296.90px;top:260.42px;font-size:16px;line-height:17.87px;color:#222;font-weight:bold;transform:scaleX(0.9596);transform-origin:0 0;">SỔ CÁI TỔNG HỢP</div>
<div class="t" style="left:243.20px;top:283.64px;font-size:12px;line-height:13.40px;color:#222;transform:scaleX(0.9574);transform-origin:0 0;">Từ ngày:</div>
<div class="t" style="left:295.60px;top:283.64px;font-size:12px;line-height:13.40px;color:#222;transform:scaleX(1.0258);transform-origin:0 0;">01/01/2020</div>
<div class="t" style="left:360.30px;top:283.64px;font-size:12px;line-height:13.40px;color:#222;transform:scaleX(1.0110);transform-origin:0 0;">Đến ngày:</div>
<div class="t" style="left:429.80px;top:283.64px;font-size:12px;line-height:13.40px;color:#222;transform:scaleX(1.0241);transform-origin:0 0;">31/12/2020</div>
<div class="t" style="left:310.60px;top:303.34px;font-size:12px;line-height:13.40px;color:#222;transform:scaleX(1.0191);transform-origin:0 0;">Tài khoản:</div>
<div class="t" style="left:379.00px;top:303.34px;font-size:12px;line-height:13.40px;color:#222;transform:scaleX(0.9923);transform-origin:0 0;">1111000</div>
<div class="t" style="left:54.80px;top:340.04px;font-size:12px;line-height:13.40px;color:#222;transform:scaleX(0.9328);transform-origin:0 0;">DOCSMAP</div>
<div class="t" style="left:55.40px;top:374.74px;font-size:12px;line-height:13.40px;color:#222;transform:scaleX(1.0058);transform-origin:0 0;">Tài khoản</div>
<div class="t" style="left:251.00px;top:374.54px;font-size:12px;line-height:13.40px;color:#222;transform:scaleX(1.0119);transform-origin:0 0;">Tên Tài khoản</div>
<div class="t" style="left:455.10px;top:365.34px;font-size:12px;line-height:13.40px;color:#222;transform:scaleX(0.9945);transform-origin:0 0;">Tài Khoản</div>
<div class="t" style="left:459.50px;top:384.54px;font-size:12px;line-height:13.40px;color:#222;transform:scaleX(1.0282);transform-origin:0 0;">Đối Ứng</div>
<div class="t" style="left:580.10px;top:365.34px;font-size:12px;line-height:13.40px;color:#222;transform:scaleX(1.0109);transform-origin:0 0;">Phát Sinh</div>
<div class="t" style="left:555.00px;top:393.14px;font-size:12px;line-height:13.40px;color:#222;transform:scaleX(1.0402);transform-origin:0 0;">Nợ</div>
<div class="t" style="left:648.80px;top:393.14px;font-size:12px;line-height:13.40px;color:#222;transform:scaleX(0.9388);transform-origin:0 0;">Có</div>
<div class="t" style="left:525.00px;top:411.54px;font-size:12px;line-height:13.40px;color:#222;font-weight:bold;font-style:italic;transform:scaleX(0.9696);transform-origin:0 0;">13,692,254.00</div>
<div class="t" style="left:642.00px;top:411.54px;font-size:12px;line-height:13.40px;color:#222;font-weight:bold;font-style:italic;transform:scaleX(0.9934);transform-origin:0 0;">0.00</div>
<div class="t" style="left:60.85px;top:431.54px;font-size:12px;line-height:13.40px;color:#222;transform:scaleX(1.0059);transform-origin:0 0;">1111000</div>
<div class="t" style="left:133.10px;top:431.54px;font-size:12px;line-height:13.40px;color:#222;">Tiền Việt Nam - Sacombank (030023821 555)</div>
<div class="t" style="left:460.95px;top:431.54px;font-size:12px;line-height:13.40px;color:#222;transform:scaleX(0.9624);transform-origin:0 0;">1121200</div>
<div class="t" style="left:540.80px;top:431.54px;font-size:12px;line-height:13.40px;color:#222;transform:scaleX(0.9696);transform-origin:0 0;">200,000,000</div>
<div class="t" style="left:675.20px;top:431.54px;font-size:12px;line-height:13.40px;color:#222;transform:scaleX(0.9010);transform-origin:0 0;">-</div>
<svg style="position:absolute;left:35.6px;top:427.4px;" width="6" height="6" viewBox="0 0 6 6"><path d="M0 0H5.5L0 5.5z" fill="#1e8c1e"/></svg>
<svg style="position:absolute;left:451px;top:427.4px;" width="6" height="6" viewBox="0 0 6 6"><path d="M0 0H5.5L0 5.5z" fill="#1e8c1e"/></svg>
<div class="t" style="left:60.85px;top:450.64px;font-size:12px;line-height:13.40px;color:#222;transform:scaleX(1.0059);transform-origin:0 0;">1111000</div>
<div class="t" style="left:133.10px;top:450.64px;font-size:12px;line-height:13.40px;color:#222;transform:scaleX(1.0092);transform-origin:0 0;">Phải thu của khách hàng</div>
<div class="t" style="left:460.95px;top:450.64px;font-size:12px;line-height:13.40px;color:#222;transform:scaleX(0.9441);transform-origin:0 0;">1310000</div>
<div class="t" style="left:530.50px;top:450.64px;font-size:12px;line-height:13.40px;color:#222;transform:scaleX(0.9774);transform-origin:0 0;">5,835,053,048</div>
<div class="t" style="left:675.20px;top:450.64px;font-size:12px;line-height:13.40px;color:#222;transform:scaleX(0.9010);transform-origin:0 0;">-</div>
<svg style="position:absolute;left:35.6px;top:446.4px;" width="6" height="6" viewBox="0 0 6 6"><path d="M0 0H5.5L0 5.5z" fill="#1e8c1e"/></svg>
<svg style="position:absolute;left:451px;top:446.4px;" width="6" height="6" viewBox="0 0 6 6"><path d="M0 0H5.5L0 5.5z" fill="#1e8c1e"/></svg>
<div class="t" style="left:60.85px;top:468.94px;font-size:12px;line-height:13.40px;color:#222;transform:scaleX(1.0059);transform-origin:0 0;">1111000</div>
<div class="t" style="left:133.10px;top:468.94px;font-size:12px;line-height:13.40px;color:#222;transform:scaleX(1.0092);transform-origin:0 0;">Phải thu của khách hàng</div>
<div class="t" style="left:460.95px;top:468.94px;font-size:12px;line-height:13.40px;color:#222;transform:scaleX(0.9441);transform-origin:0 0;">1310000</div>
<div class="t" style="left:540.80px;top:468.94px;font-size:12px;line-height:13.40px;color:#222;transform:scaleX(0.9696);transform-origin:0 0;">539,322,100</div>
<div class="t" style="left:675.20px;top:468.94px;font-size:12px;line-height:13.40px;color:#222;transform:scaleX(0.9010);transform-origin:0 0;">-</div>
<svg style="position:absolute;left:35.6px;top:465.5px;" width="6" height="6" viewBox="0 0 6 6"><path d="M0 0H5.5L0 5.5z" fill="#1e8c1e"/></svg>
<svg style="position:absolute;left:451px;top:465.5px;" width="6" height="6" viewBox="0 0 6 6"><path d="M0 0H5.5L0 5.5z" fill="#1e8c1e"/></svg>
<div class="t" style="left:60.85px;top:488.64px;font-size:12px;line-height:13.40px;color:#222;transform:scaleX(1.0059);transform-origin:0 0;">1111000</div>
<div class="t" style="left:133.10px;top:488.64px;font-size:12px;line-height:13.40px;color:#222;transform:scaleX(0.9943);transform-origin:0 0;">Thuế GTGT được khấu trừ của hàng hóa, dịch vụ</div>
<div class="t" style="left:460.95px;top:488.64px;font-size:12px;line-height:13.40px;color:#222;transform:scaleX(0.9441);transform-origin:0 0;">1331000</div>
<div class="t" style="left:588.60px;top:488.64px;font-size:12px;line-height:13.40px;color:#222;transform:scaleX(0.9761);transform-origin:0 0;">-</div>
<div class="t" style="left:685.70px;top:488.64px;font-size:12px;line-height:13.40px;color:#222;transform:scaleX(0.9441);transform-origin:0 0;">2</div>
<svg style="position:absolute;left:35.6px;top:483.8px;" width="6" height="6" viewBox="0 0 6 6"><path d="M0 0H5.5L0 5.5z" fill="#1e8c1e"/></svg>
<svg style="position:absolute;left:451px;top:483.8px;" width="6" height="6" viewBox="0 0 6 6"><path d="M0 0H5.5L0 5.5z" fill="#1e8c1e"/></svg>
<div class="t" style="left:60.85px;top:506.54px;font-size:12px;line-height:13.40px;color:#222;transform:scaleX(1.0059);transform-origin:0 0;">1111000</div>
<div class="t" style="left:133.10px;top:506.54px;font-size:12px;line-height:13.40px;color:#222;transform:scaleX(1.0232);transform-origin:0 0;">Phải thu khác</div>
<div class="t" style="left:460.95px;top:506.54px;font-size:12px;line-height:13.40px;color:#222;transform:scaleX(0.9441);transform-origin:0 0;">1388000</div>
<div class="t" style="left:553.40px;top:506.54px;font-size:12px;line-height:13.40px;color:#222;transform:scaleX(0.9760);transform-origin:0 0;">3,698,980</div>
<div class="t" style="left:675.20px;top:506.54px;font-size:12px;line-height:13.40px;color:#222;transform:scaleX(0.9010);transform-origin:0 0;">-</div>
<svg style="position:absolute;left:35.6px;top:503.5px;" width="6" height="6" viewBox="0 0 6 6"><path d="M0 0H5.5L0 5.5z" fill="#1e8c1e"/></svg>
<svg style="position:absolute;left:451px;top:503.5px;" width="6" height="6" viewBox="0 0 6 6"><path d="M0 0H5.5L0 5.5z" fill="#1e8c1e"/></svg>
<div class="t" style="left:60.85px;top:525.94px;font-size:12px;line-height:13.40px;color:#222;transform:scaleX(1.0059);transform-origin:0 0;">1111000</div>
<div class="t" style="left:133.10px;top:525.94px;font-size:12px;line-height:13.40px;color:#222;transform:scaleX(1.0144);transform-origin:0 0;">Phải trả cho người bán</div>
<div class="t" style="left:460.95px;top:525.94px;font-size:12px;line-height:13.40px;color:#222;transform:scaleX(0.9441);transform-origin:0 0;">3310000</div>
<div class="t" style="left:588.60px;top:525.94px;font-size:12px;line-height:13.40px;color:#222;transform:scaleX(0.9761);transform-origin:0 0;">-</div>
<div class="t" style="left:627.30px;top:525.94px;font-size:12px;line-height:13.40px;color:#222;transform:scaleX(0.9696);transform-origin:0 0;">316,154,220</div>
<svg style="position:absolute;left:35.6px;top:521.4000000000001px;" width="6" height="6" viewBox="0 0 6 6"><path d="M0 0H5.5L0 5.5z" fill="#1e8c1e"/></svg>
<svg style="position:absolute;left:451px;top:521.4000000000001px;" width="6" height="6" viewBox="0 0 6 6"><path d="M0 0H5.5L0 5.5z" fill="#1e8c1e"/></svg>
<div class="t" style="left:60.85px;top:544.94px;font-size:12px;line-height:13.40px;color:#222;transform:scaleX(1.0059);transform-origin:0 0;">1111000</div>
<div class="t" style="left:133.10px;top:544.94px;font-size:12px;line-height:13.40px;color:#222;transform:scaleX(1.0144);transform-origin:0 0;">Phải trả cho người bán</div>
<div class="t" style="left:460.95px;top:544.94px;font-size:12px;line-height:13.40px;color:#222;transform:scaleX(0.9441);transform-origin:0 0;">3310000</div>
<div class="t" style="left:588.60px;top:544.94px;font-size:12px;line-height:13.40px;color:#222;transform:scaleX(0.9761);transform-origin:0 0;">-</div>
<div class="t" style="left:633.60px;top:544.94px;font-size:12px;line-height:13.40px;color:#222;transform:scaleX(0.9725);transform-origin:0 0;">16,210,544</div>
<svg style="position:absolute;left:35.6px;top:540.8000000000001px;" width="6" height="6" viewBox="0 0 6 6"><path d="M0 0H5.5L0 5.5z" fill="#1e8c1e"/></svg>
<svg style="position:absolute;left:451px;top:540.8000000000001px;" width="6" height="6" viewBox="0 0 6 6"><path d="M0 0H5.5L0 5.5z" fill="#1e8c1e"/></svg>
<div class="t" style="left:60.85px;top:563.94px;font-size:12px;line-height:13.40px;color:#222;transform:scaleX(1.0059);transform-origin:0 0;">1111000</div>
<div class="t" style="left:133.10px;top:563.94px;font-size:12px;line-height:13.40px;color:#222;transform:scaleX(1.0248);transform-origin:0 0;">Phải trả công nhân viên</div>
<div class="t" style="left:460.95px;top:563.94px;font-size:12px;line-height:13.40px;color:#222;transform:scaleX(0.9441);transform-origin:0 0;">3341000</div>
<div class="t" style="left:588.60px;top:563.94px;font-size:12px;line-height:13.40px;color:#222;transform:scaleX(0.9761);transform-origin:0 0;">-</div>
<div class="t" style="left:633.60px;top:563.94px;font-size:12px;line-height:13.40px;color:#222;transform:scaleX(0.9725);transform-origin:0 0;">43,739,171</div>
<svg style="position:absolute;left:35.6px;top:559.8000000000001px;" width="6" height="6" viewBox="0 0 6 6"><path d="M0 0H5.5L0 5.5z" fill="#1e8c1e"/></svg>
<svg style="position:absolute;left:451px;top:559.8000000000001px;" width="6" height="6" viewBox="0 0 6 6"><path d="M0 0H5.5L0 5.5z" fill="#1e8c1e"/></svg>
<div class="t" style="left:60.85px;top:583.04px;font-size:12px;line-height:13.40px;color:#222;transform:scaleX(1.0059);transform-origin:0 0;">1111000</div>
<div class="t" style="left:133.10px;top:583.04px;font-size:12px;line-height:13.40px;color:#222;transform:scaleX(1.0247);transform-origin:0 0;">Chi phí nhân viên phân xưởng</div>
<div class="t" style="left:460.95px;top:583.04px;font-size:12px;line-height:13.40px;color:#222;transform:scaleX(0.9441);transform-origin:0 0;">6271000</div>
<div class="t" style="left:588.60px;top:583.04px;font-size:12px;line-height:13.40px;color:#222;transform:scaleX(0.9761);transform-origin:0 0;">-</div>
<div class="t" style="left:639.90px;top:583.04px;font-size:12px;line-height:13.40px;color:#222;transform:scaleX(0.9760);transform-origin:0 0;">8,380,000</div>
<svg style="position:absolute;left:35.6px;top:578.8000000000001px;" width="6" height="6" viewBox="0 0 6 6"><path d="M0 0H5.5L0 5.5z" fill="#1e8c1e"/></svg>
<svg style="position:absolute;left:451px;top:578.8000000000001px;" width="6" height="6" viewBox="0 0 6 6"><path d="M0 0H5.5L0 5.5z" fill="#1e8c1e"/></svg>
<svg style="position:absolute;left:35.6px;top:597.9px;" width="6" height="5" viewBox="0 0 6 5"><path d="M0 0H5.5L0 5.5z" fill="#1e8c1e"/></svg>
<svg style="position:absolute;left:451px;top:597.9px;" width="6" height="5" viewBox="0 0 6 5"><path d="M0 0H5.5L0 5.5z" fill="#1e8c1e"/></svg>
<div style="left:449.00px;top:540.00px;width:67.00px;height:21.00px;border:2px solid #217346"></div>
<div style="left:512.00px;top:557.50px;width:6.50px;height:6.50px;background:#217346;border:1px solid #fff"></div>
<div style="left:419.90px;top:541.20px;width:17.40px;height:17.90px;background:#fff;border:1px solid #d6d6d6"></div>
<svg style="position:absolute;left:422px;top:544px;" width="13" height="13" viewBox="0 0 13 13"><path d="M6.5 0.5L12.5 6.5L6.5 12.5L0.5 6.5z" fill="#f5df7e" stroke="#e6cc62" stroke-width="0.8"/><path d="M6.5 3.3v4.2" stroke="#8a7a40" stroke-width="1.3"/><circle cx="6.5" cy="9.4" r="0.75" fill="#8a7a40"/></svg>
<div style="left:1147.00px;top:197.50px;width:19.00px;height:405.20px;background:#e6e6e6"></div>
<div style="left:1146.50px;top:215.00px;width:1.00px;height:387.70px;background:#c6c6c6"></div>
<div style="left:1150.30px;top:199.60px;width:12.70px;height:13.20px;background:#fff;border:1px solid #d6d6d6"></div>
<svg style="position:absolute;left:1153.5px;top:204px;" width="7" height="4" viewBox="0 0 7 4"><path d="M0 3.5L3.5 0L7 3.5z" fill="#666"/></svg>
<div style="left:1150.30px;top:213.00px;width:12.70px;height:376.00px;background:#dcdcdc"></div>
<div style="left:1150.30px;top:248.60px;width:12.90px;height:233.40px;background:#fff;border:1px solid #c6c6c6"></div>
<div style="left:1150.50px;top:589.20px;width:12.50px;height:13.00px;background:#fff;border:1px solid #d6d6d6"></div>
<svg style="position:absolute;left:1153.5px;top:594px;" width="7" height="4" viewBox="0 0 7 4"><path d="M0 0H7L3.5 3.5z" fill="#666"/></svg>
<div style="left:3.50px;top:602.20px;width:1162.50px;height:1.00px;background:#c6c6c6"></div>
<svg style="position:absolute;left:27px;top:609px;" width="6" height="10" viewBox="0 0 6 10"><path d="M5 1L1 5 5 9z" fill="#bbb"/></svg>
<svg style="position:absolute;left:53px;top:609px;" width="6" height="10" viewBox="0 0 6 10"><path d="M1 1L5 5 1 9z" fill="#217346"/></svg>
<div style="left:94.00px;top:606.00px;width:1.50px;height:18.00px;background:#c6c6c6"></div>
<div class="t" style="left:105.40px;top:608.74px;font-size:12px;line-height:13.40px;color:#555;">DocsMap</div>
<div style="left:168.40px;top:602.50px;width:66.80px;height:22.70px;background:#fff"></div>
<div style="left:168.40px;top:622.70px;width:66.80px;height:2.50px;background:#3b8a5e"></div>
<div class="t" style="left:179.00px;top:608.74px;font-size:12px;line-height:13.40px;color:#217346;font-weight:bold;transform:scaleX(0.9927);transform-origin:0 0;">1111000</div>
<div class="t" style="left:245.50px;top:608.74px;font-size:12px;line-height:13.40px;color:#555;transform:scaleX(0.9860);transform-origin:0 0;">1112000</div>
<div class="t" style="left:312.30px;top:608.74px;font-size:12px;line-height:13.40px;color:#555;transform:scaleX(0.9860);transform-origin:0 0;">1121100</div>
<div class="t" style="left:379.00px;top:608.74px;font-size:12px;line-height:13.40px;color:#555;transform:scaleX(0.9668);transform-origin:0 0;">1121200</div>
<div class="t" style="left:445.30px;top:608.74px;font-size:12px;line-height:13.40px;color:#555;transform:scaleX(0.9668);transform-origin:0 0;">1121300</div>
<div class="t" style="left:511.90px;top:608.74px;font-size:12px;line-height:13.40px;color:#555;transform:scaleX(0.9668);transform-origin:0 0;">1121400</div>
<div class="t" style="left:578.40px;top:608.74px;font-size:12px;line-height:13.40px;color:#555;transform:scaleX(0.9668);transform-origin:0 0;">1122100</div>
<div style="left:301.50px;top:607.00px;width:1.20px;height:17.00px;background:#c6c6c6"></div>
<div style="left:367.80px;top:607.00px;width:1.20px;height:17.00px;background:#c6c6c6"></div>
<div style="left:434.50px;top:607.00px;width:1.20px;height:17.00px;background:#c6c6c6"></div>
<div style="left:501.10px;top:607.00px;width:1.20px;height:17.00px;background:#c6c6c6"></div>
<div style="left:568.10px;top:607.00px;width:1.20px;height:17.00px;background:#c6c6c6"></div>
<div style="left:633.50px;top:607.00px;width:1.20px;height:17.00px;background:#c6c6c6"></div>
<div class="t" style="left:645.00px;top:608.74px;font-size:12px;line-height:13.40px;color:#217346;font-weight:bold;transform:scaleX(1.0599);transform-origin:0 0;">...</div>
<svg style="position:absolute;left:667px;top:608px;" width="16" height="16" viewBox="0 0 16 16"><circle cx="7.7" cy="7.6" r="6.8" fill="none" stroke="#666" stroke-width="1.2"/><path d="M7.7 3.8v7.6M3.9 7.6h7.6" stroke="#555" stroke-width="1.4"/></svg>
<svg style="position:absolute;left:699px;top:608px;" width="4" height="14" viewBox="0 0 4 14"><circle cx="2" cy="2" r="0.8" fill="#aaa"/><circle cx="2" cy="6.5" r="0.8" fill="#aaa"/><circle cx="2" cy="11" r="0.8" fill="#aaa"/></svg>
<div style="left:716.30px;top:608.30px;width:387.70px;height:14.40px;background:#fff;border:1px solid #c6c6c6"></div>
<div style="left:716.30px;top:608.30px;width:13.70px;height:14.40px;background:#fff;border:1px solid #c6c6c6"></div>
<svg style="position:absolute;left:720.5px;top:612px;" width="5" height="7" viewBox="0 0 5 7"><path d="M4.5 0L0.5 3.5L4.5 7z" fill="#555"/></svg>
<div style="left:1104.00px;top:608.30px;width:29.00px;height:14.40px;background:#dcdcdc"></div>
<div style="left:1133.90px;top:608.30px;width:12.60px;height:14.40px;background:#fff;border:1px solid #d6d6d6"></div>
<svg style="position:absolute;left:1138px;top:612px;" width="5" height="7" viewBox="0 0 5 7"><path d="M0.5 0L4.5 3.5L0.5 7z" fill="#555"/></svg>
<div class="t" style="left:9.50px;top:632.94px;font-size:11px;line-height:12.29px;color:#666;transform:scaleX(0.8869);transform-origin:0 0;">Ready</div>
<div style="left:890.40px;top:628.90px;width:34.10px;height:18.60px;background:#c8c8c8"></div>
<svg style="position:absolute;left:900px;top:632px;" width="13" height="13" viewBox="0 0 13 13"><rect x="0.5" y="0.5" width="12" height="12" fill="none" stroke="#777" stroke-width="1"/><path d="M4.5 0.5v12M8.5 0.5v12M0.5 4.5h12M0.5 8.5h12" stroke="#777" stroke-width="1"/></svg>
<svg style="position:absolute;left:935.5px;top:632px;" width="13" height="13" viewBox="0 0 13 13"><rect x="0.6" y="0.6" width="11.8" height="11.8" fill="none" stroke="#7a7a7a" stroke-width="1.1"/><path d="M3.8 2.2v8.6M9.2 2.2v8.6" stroke="#8a8a8a" stroke-width="1.1"/></svg>
<svg style="position:absolute;left:970px;top:632px;" width="13" height="13" viewBox="0 0 13 13"><rect x="0.6" y="0.6" width="11.8" height="11.8" fill="none" stroke="#7a7a7a" stroke-width="1.1"/><path d="M0.6 7.5h8V0.6M3.6 0.6v6.9" fill="none" stroke="#7a7a7a" stroke-width="1.1"/></svg>
<div style="left:998.00px;top:637.50px;width:6.00px;height:1.50px;background:#555"></div>
<div style="left:1007.00px;top:638.00px;width:92.00px;height:1.00px;background:#bbb"></div>
<div style="left:1052.00px;top:633.50px;width:3.00px;height:10.00px;background:#555"></div>
<div style="left:1101.00px;top:637.80px;width:9.50px;height:1.50px;background:#555"></div>
<div style="left:1105.00px;top:633.80px;width:1.50px;height:9.50px;background:#555"></div>
<div class="t" style="left:1123.50px;top:632.04px;font-size:11px;line-height:12.29px;color:#555;transform:scaleX(0.8531);transform-origin:0 0;">100%</div>
<div style="left:2.00px;top:65.40px;width:2.00px;height:583.60px;background:#8dba9f"></div>
<div style="left:4.00px;top:154.00px;width:1.00px;height:493.50px;background:#f2f0f2"></div>
<div style="left:1165.50px;top:65.40px;width:2.50px;height:583.60px;background:#70968a"></div>
<div style="left:1164.50px;top:154.00px;width:1.00px;height:493.50px;background:#ebe7e9"></div>
<div style="left:2.00px;top:647.50px;width:1166.00px;height:1.50px;background:#8bbda1"></div>
</body></html>
